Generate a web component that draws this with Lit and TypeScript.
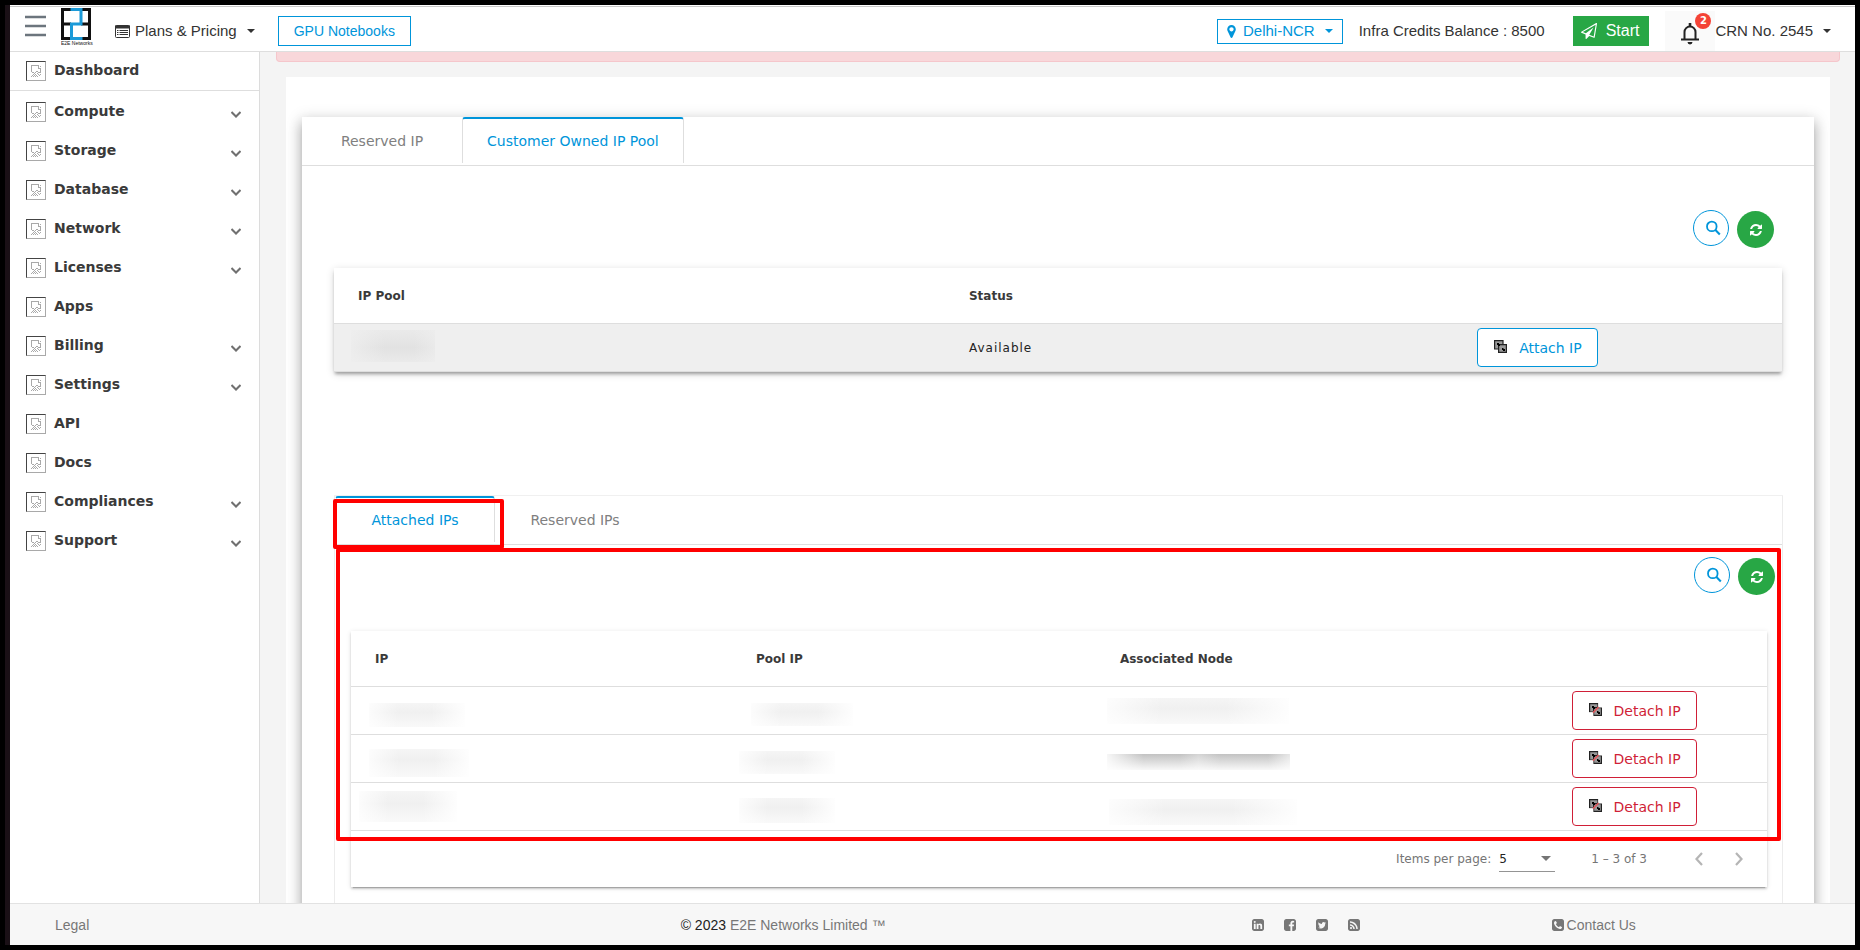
import { LitElement, html, svg, css, nothing } from "lit";
import { customElement, property } from "lit/decorators.js";
import { styleMap } from "lit/directives/style-map.js";

const SQUARE =
  "v960q0 119-84.5 203.5t-203.5 84.5h-960q-119 0-203.5-84.5t-84.5-203.5v-960q0-119 84.5-203.5t203.5-84.5h960q119 0 203.5 84.5t84.5 203.5z";

const GLYPHS: Record<string, string> = {
  refresh:
    "M1639 1056q0 5-1 7-64 268-268 434.5t-478 166.5q-146 0-282.5-55t-243.5-157l-129 129q-19 19-45 19t-45-19-19-45v-448q0-26 19-45t45-19h448q26 0 45 19t19 45-19 45l-137 137q71 66 161 102t187 36q134 0 250-65t186-179q11-17 53-117 8-23 30-23h192q13 0 22.5 9.5t9.5 22.5zm25-800v448q0 26-19 45t-45 19h-448q-26 0-45-19t-19-45 19-45l138-138q-148-137-349-137-134 0-250 65t-186 179q-11 17-53 117-8 23-30 23h-199q-13 0-22.5-9.5t-9.5-22.5v-7q65-268 270-434.5t480-166.5q146 0 284 55.5t245 156.5l130-129q19-19 45-19t45 19 19 45z",
  marker:
    "M1152 640q0-106-75-181t-181-75-181 75-75 181 75 181 181 75 181-75 75-181zm256 0q0 109-33 179l-364 774q-16 33-47.5 52t-67.5 19-67.5-19-46.5-52l-365-774q-33-70-33-179 0-212 150-362t362-150 362 150 150 362z",
  plane:
    "M1764 11q33 24 27 64l-256 1536q-5 29-32 45-14 8-31 8-11 0-24-5l-527-215-298 327q-18 21-47 21-14 0-23-4-19-7-30-23.5t-11-36.5v-452l-472-193q-37-14-40-55-3-39 32-59l1664-960q35-21 68 2zm-342 1499l221-1323-1434 827 336 137 863-639-478 797z",
  linkedin:
    "M365 1414h231v-694h-231v694zm246-908q-1-52-36-86t-93-34-94.5 34-36.5 86q0 51 35.5 85.5t92.5 34.5h1q59 0 95-34.5t36-85.5zm585 908h231v-398q0-154-73-233t-193-79q-136 0-209 117h2v-101h-231q3 66 0 694h231v-388q0-38 7-56 15-35 45-59.5t74-24.5q116 0 116 157v371zm468-998" + SQUARE,
  facebook:
    "M1376 128q119 0 203.5 84.5t84.5 203.5v960q0 119-84.5 203.5t-203.5 84.5h-188v-595h199l30-232h-229v-148q0-56 23.5-84t91.5-28l122-1v-207q-63-9-178-9-136 0-217.5 80t-81.5 226v171h-200v232h200v595h-532q-119 0-203.5-84.5t-84.5-203.5v-960q0-119 84.5-203.5t203.5-84.5h960z",
  twitter:
    "M1408 610q-56 25-121 34 68-40 93-117-65 38-134 51-61-66-153-66-87 0-148.5 61.5t-61.5 148.5q0 29 5 48-129-7-242-65t-192-155q-29 50-29 106 0 114 91 175-47-1-100-26v2q0 75 50 133.5t123 72.5q-29 8-51 8-13 0-39-4 21 63 74.5 104t121.5 42q-116 90-261 90-26 0-50-3 148 94 322 94 112 0 210-35.5t168-95 120.5-137 75-162 24.5-168.5q0-18-1-27 63-45 105-109zm256-194" + SQUARE,
  rss:
    "M640 1280q0-53-37.5-90.5t-90.5-37.5-90.5 37.5-37.5 90.5 37.5 90.5 90.5 37.5 90.5-37.5 37.5-90.5zm351 94q-13-232-177-396t-396-177q-14-1-24 9t-10 23v128q0 13 8.5 22t21.5 10q154 11 264 121t121 264q1 13 10 21.5t22 8.5h128q13 0 23-10t9-24zm384 1q-5-154-56-297.5t-139.5-260-205-205-260-139.5-297.5-56q-14-1-23 9-10 10-10 23v128q0 13 9 22t22 10q204 7 378 111.5t278.5 278.5 111.5 378q1 13 10 22t22 9h128q13 0 23-10 11-9 9-23zm289-959" + SQUARE,
  phone:
    "M1408 1193q0-11-2-16t-18-16.5-40.5-25-47.5-26.5-45.5-25-28.5-15q-5-3-19-13t-25-15-21-5q-15 0-36.5 20.5t-39.5 45-38.5 45-33.5 20.5q-7 0-16.5-3.5t-15.5-6.5-17-9.5-14-8.5q-99-55-170-126.5t-127-170.5q-2-3-8.5-14t-9.5-17-6.5-15.5-3.5-16.5q0-13 20.5-33.5t45-38.5 45-39.5 20.5-36.5q0-10-5-21t-15-25-13-19q-3-6-15-28.5t-25-45.5-26.5-47.5-25-40.5-16.5-18-16-2q-48 0-101 22-46 21-80 94.5t-34 130.5q0 16 2.5 34t5 30.5 9 33 10 29.5 12.5 33 11 30q60 164 216.5 320.5t320.5 216.5q6 2 30 11t33 12.5 29.5 10 33 9 30.5 5 34 2.5q57 0 130.5-34t94.5-80q22-53 22-101zm256-777" + SQUARE,
};

const glyph = (name: string, size: number) => html`
  <svg width=${size} height=${size} viewBox="0 0 1792 1792" fill="currentColor" aria-hidden="true">
    <path d=${GLYPHS[name]}></path>
  </svg>`;

const caret = html`<svg width="8" height="4" viewBox="0 0 8 4" fill="currentColor" aria-hidden="true"><path d="M0 0h8L4 4z"></path></svg>`;

const searchIcon = html`<svg width="16" height="16" viewBox="0 0 16 16" fill="none" stroke="currentColor" stroke-width="1.8" aria-hidden="true"><circle cx="6.8" cy="6.4" r="4.8"></circle><path d="M10.2 9.8l4.6 4.6" stroke-width="2.1"></path></svg>`;

const missingPicture = html`<svg width="10" height="12" viewBox="0 0 10 12" fill="#a9a9a9" shape-rendering="crispEdges" aria-hidden="true">
  <path d="M0 0h8v1H0zM0 1h1v6H0zM7 1h1v3H7zM9 1h1v1H9zM8 3h2v1H8zM9 4h1v4H9zM1 7h2v1H1zM3 8h1v1H3zM4 7h1v1H4zM5 6h2v1H5zM7 7h3v1H7zM2 9h1v1H2zM4 9h1v1H4zM6 8h1v1H6zM7 9h1v1H7zM1 10h1v1H1zM3 10h1v1H3zM5 10h1v1H5zM8 10h1v1H8zM0 11h1v1H0zM2 11h1v1H2zM4 11h1v1H4zM6 11h1v1H6zM9 9h1v1H9z"></path></svg>`;

const linkIcon = (cut: boolean) => html`<svg width="13" height="13" viewBox="0 0 13 13" aria-hidden="true">
  <path d="M.6.6h8.400v8.400H.6z" fill="#999" stroke="#222" stroke-width="1.200"></path>
  <path d="M4.600 4.600h7.800v7.800H4.600z" fill="#999" stroke="#222" stroke-width="1.200"></path>
  <path d="M3 3h2v1h1v2H4V5H3zM8 8h1.500v1H11v2H9v-1H8z" fill="#000"></path>
  ${cut ? svg`<path d="M9.800 0v3.800H13M0 9.800h3.800V13" stroke="#fff" stroke-width="1.200" fill="none"></path><path d="M4 9.600L9.600 4" stroke="#e4575c" stroke-width="1.500"></path>` : nothing}
</svg>`;

const MENU: [string, boolean][] = [
  ["Compute", true], ["Storage", true], ["Database", true], ["Network", true], ["Licenses", true], ["Apps", false],
  ["Billing", true], ["Settings", true], ["API", false], ["Docs", false], ["Compliances", true], ["Support", true],
];

interface Smudge { w: number; h: number; x: number; y: number; tone: "light" | "grey" | "dark" }

const smudge = (s: Smudge) => html`<span class="smudge ${s.tone}" style=${styleMap({
  width: `${s.w}px`, height: `${s.h}px`, marginLeft: `${s.x}px`, marginTop: `${s.y}px`,
})}></span>`;

const ROWS: Smudge[][] = [
  [
    { w: 96, h: 24, x: 18, y: 16, tone: "light" },
    { w: 102, h: 23, x: -5, y: 16, tone: "light" },
    { w: 182, h: 26, x: -13, y: 11, tone: "light" },
  ],
  [
    { w: 100, h: 28, x: 18, y: 14, tone: "light" },
    { w: 96, h: 23, x: -17, y: 16, tone: "light" },
    { w: 183, h: 16, x: -13, y: 19, tone: "dark" },
  ],
  [
    { w: 98, h: 31, x: 8, y: 8, tone: "light" },
    { w: 96, h: 25, x: -17, y: 15, tone: "light" },
    { w: 188, h: 26, x: -11, y: 16, tone: "light" },
  ],
];

const base = css`
  * { box-sizing: border-box; }
  svg { display: block; flex: none; }
  button, select { font: inherit; color: inherit; background: none; border: 0; padding: 0; margin: 0; cursor: pointer; }
  a { color: inherit; text-decoration: none; }
  ul { list-style: none; margin: 0; padding: 0; }
`;

@customElement("top-bar")
class TopBar extends LitElement {
  static styles = [base, css`
    :host { display: block; margin-top: 1px; border-top: 1px solid #c8c8c8; border-bottom: 1px solid #dedede;
      font: 15px/20px "Liberation Sans", Arial, sans-serif; color: #333; background: #fff; }
    .bar { display: flex; align-items: center; height: 44px; padding: 4px 24px 0 15px; }
    .burger { color: #6c757d; align-self: flex-start; padding-top: 4px; }
    .logo { margin-left: 15px; align-self: flex-start; margin-top: -3px; }
    .menu { display: flex; align-items: center; gap: 5px; }
    .menu .caret { margin-left: 5px; }
    .plans { margin-left: 20px; }
    .outlined { display: flex; align-items: center; border: 1px solid #0095da; color: #0095da; }
    .gpu { height: 30px; padding: 0 15px; margin-left: 23px; font-size: 14px; }
    .region { height: 25px; padding: 0 9px 0 6px; margin-left: auto; gap: 4px; }
    .region .caret { margin-left: 6px; }
    .credits { margin-left: 16px; }
    .start { display: flex; align-items: center; gap: 9px; height: 30px; padding: 0 10px 0 8px; margin-left: 28px;
      background: #28a745; color: #fff; font-size: 16px; }
    .bell { position: relative; display: flex; align-items: center; justify-content: center; width: 50px; height: 40px;
      margin-left: 16px; padding-top: 5px; background: #fafafa; align-self: flex-end; color: #222; }
    .badge { position: absolute; top: 2px; right: 4px; width: 16px; height: 16px; border-radius: 8px;
      background: #f44336; color: #fff; font: bold 10px/16px "DejaVu Sans", sans-serif; text-align: center; }
  `];
  render() {
    return html`<header class="bar">
      <button class="burger" aria-label="Toggle menu">
        <svg width="21" height="22" viewBox="0 0 21 22" fill="none" stroke="currentColor" stroke-width="2.500"><path d="M0 2h21M0 11h21M0 20h21"></path></svg>
      </button>
      <a class="logo" href="#" aria-label="E2E Networks">
        <svg width="34" height="40" viewBox="0 0 34 40">
          <g fill="none" stroke="#111" stroke-width="3"><path d="M10 1.500H1.500v29H10M1.500 16H10M21 1.500h7.500v29H21M28.500 16H20"></path></g>
          <path d="M9.500 1.500h10.500V16h-9.500v14.500h11" fill="none" stroke="#1b9ad8" stroke-width="3"></path>
          <text x="0" y="37" font-family="Liberation Sans" font-size="5" fill="#111">E2E Networks</text>
        </svg>
      </a>
      <button class="menu plans">
        <svg width="15" height="13" viewBox="0 0 15 13" fill="none" stroke="currentColor"><rect x=".5" y=".5" width="14" height="12" rx="1"></rect><path d="M0 2h15" stroke-width="3"></path><path d="M2 5.500h1.500M4.500 5.500h8.500M2 7.500h1.500M4.500 7.500h8.500M2 9.500h1.500M4.500 9.500h8.500"></path></svg>
        Plans &amp; Pricing <span class="caret">${caret}</span>
      </button>
      <button class="outlined gpu">GPU Notebooks</button>
      <button class="outlined region">${glyph("marker", 15)} Delhi-NCR <span class="caret">${caret}</span></button>
      <span class="credits">Infra Credits Balance : 8500</span>
      <button class="start">${glyph("plane", 16)} Start</button>
      <button class="bell" aria-label="Notifications">
        <svg width="18" height="22" viewBox="0 0 18 22" fill="none" stroke="currentColor" stroke-width="2"><path d="M0 16.500h18M3.500 16V9a5.500 5.500 0 0 1 11 0v7"></path><path d="M9 0v3.500" stroke-width="2.600"></path><path d="M6.500 19h5a2.500 2.500 0 0 1-5 0z" fill="currentColor" stroke="none"></path></svg>
        <span class="badge">2</span>
      </button>
      <button class="menu">CRN No. 2545 <span class="caret">${caret}</span></button>
    </header>`;
  }
}

@customElement("side-menu")
class SideMenu extends LitElement {
  static styles = [base, css`
    :host { display: block; border-right: 1px solid #dcdcdc; background: #fff;
      font: bold 14px/18px "DejaVu Sans", sans-serif; color: #3a3a3a; }
    .item { display: flex; align-items: center; gap: 8px; height: 39px; padding: 0 18px 0 16px; }
    .first { border-bottom: 1px solid #dedede; }
    .list { padding-top: 1px; }
    .frame { display: flex; align-items: center; justify-content: center; flex: none; width: 20px; height: 20px;
      border: 1px solid; border-color: #444 #a9a9a9 #a9a9a9 #444; }
    .label { padding-bottom: 2px; }
    .chevron { margin-left: auto; padding-top: 6px; color: #707070; }
  `];
  item(label: string, nested: boolean, extra = "") {
    return html`<a class="item ${extra}" href="#">
      <span class="frame">${missingPicture}</span><span class="label">${label}</span>
      ${nested ? html`<span class="chevron"><svg width="10" height="7" viewBox="0 0 10 7" fill="none" stroke="currentColor" stroke-width="2"><path d="M.5 1L5 5.500 9.500 1"></path></svg></span>` : nothing}
    </a>`;
  }
  render() {
    return html`<nav>
      ${this.item("Dashboard", false, "first")}
      <ul class="list">${MENU.map(([label, nested]) => html`<li>${this.item(label, nested)}</li>`)}</ul>
    </nav>`;
  }
}

@customElement("tab-strip")
class TabStrip extends LitElement {
  @property({ attribute: false }) tabs: string[] = [];
  @property({ type: Number }) active = 0;
  static styles = [base, css`
    :host { display: block; border-bottom: 1px solid #dedede; font: 14px/20px "DejaVu Sans", sans-serif; color: #808080; }
    .tabs { display: flex; height: 48px; }
    .tab { height: 46px; min-width: 160px; padding: 0 24px; border: 1px solid transparent; border-width: 2px 1px 0; }
    .tab.on { color: #0095da; border-color: #0095da #dedede; border-radius: 3px 3px 0 0; }
    .tab.on:first-child { border-left-color: transparent; }
  `];
  render() {
    return html`<div class="tabs" role="tablist">${this.tabs.map((t, i) => html`
      <button class="tab ${i === this.active ? "on" : ""}" role="tab" aria-selected=${i === this.active}>${t}</button>`)}</div>`;
  }
}

@customElement("table-tools")
class TableTools extends LitElement {
  static styles = [base, css`
    :host { display: flex; justify-content: flex-end; align-items: flex-start; gap: 8px; height: 38px; }
    .round { display: flex; align-items: center; justify-content: center; width: 36px; height: 36px; border-radius: 50%; }
    .search { border: 1px solid #0095da; color: #0095da; padding-left: 3px; }
    .refresh { align-self: flex-end; width: 37px; height: 37px; background: #28a745; color: #fff; }
  `];
  render() {
    return html`<button class="round search" aria-label="Search">${searchIcon}</button>
      <button class="round refresh" aria-label="Refresh">${glyph("refresh", 14)}</button>`;
  }
}

@customElement("ip-pool-page")
class IpPoolPage extends LitElement {
  static styles = [base, css`
    :host { display: block; overflow: hidden; padding: 0 25px 0 26px; background: #f4f4f4;
      font: 12px/16px "DejaVu Sans", sans-serif; color: #3a3a3a; }
    .alert { height: 10px; margin: 0 -10px; border: 1px solid #f5c6cb; border-top: 0; border-radius: 0 0 4px 4px; background: #f8d7da; }
    .sheet { margin-top: 15px; padding: 40px 16px 0; background: #fff; overflow: hidden; }
    .card { background: #fff; padding-bottom: 60px; box-shadow: 0 5px 5px -3px rgba(0,0,0,.2), 0 8px 12px 1px rgba(0,0,0,.2), 0 3px 14px 2px rgba(0,0,0,.14); }
    .body { padding: 44px 32px 0; }
    .body > table-tools { padding-right: 8px; margin-bottom: 20px; }
    .raised { background: #fff; box-shadow: 0 3px 1px -2px rgba(0,0,0,.2), 0 2px 2px 0 rgba(0,0,0,.14), 0 1px 5px 0 rgba(0,0,0,.12); }
    .pool { box-shadow: 0 3px 3px -1px rgba(0,0,0,.3), 0 2px 8px 0 rgba(0,0,0,.16); }
    table { width: 100%; table-layout: fixed; border-collapse: separate; border-spacing: 0; }
    th, td { padding: 0; text-align: left; border-bottom: 1px solid #dedede; }
    th { height: 56px; font-weight: bold; }
    td { height: 48px; vertical-align: top; }
    th:first-child { padding-left: 24px; }
    .shaded { background: #efefef; }
    .middle { vertical-align: middle; }
    .status { color: #222; letter-spacing: 1px; }
    .p1 { width: 43.85%; } .p2 { width: 35.1%; }
    .a1 { width: 28.6%; } .a2 { width: 25.7%; } .a3 { width: 31.9%; }
    .action { display: flex; align-items: center; gap: 12px; height: 39px; padding: 0 15px 0 16px; border: 1px solid; border-radius: 4px;
      background: #fff; font-size: 14px; line-height: 20px; }
    .action svg { margin-bottom: 2px; }
    .attach { color: #0095da; }
    .detach { color: #d01f37; }
    .smudge { display: block; }
    .light { background: linear-gradient(90deg, rgba(255,255,255,.8), transparent 30%, transparent 65%, rgba(255,255,255,.9)), linear-gradient(#f5f5f5, #f0f0f0 40%, #f9f9f9); }
    .grey { background: linear-gradient(90deg, rgba(239,239,239,.8), transparent 40%, transparent 75%, rgba(239,239,239,.6)), linear-gradient(#eaeaea, #e2e2e2 55%, #eaeaea); }
    .dark { background: linear-gradient(90deg, rgba(255,255,255,.85), transparent 20%, transparent 40%, rgba(255,255,255,.3) 50%, transparent 62%, transparent 88%, rgba(255,255,255,.6)), linear-gradient(#c2c2c2, #f8f8f8); }
    .attached { position: relative; margin: 124px -1px 0 0; padding-bottom: 80px; border: 1px solid #ececec; border-width: 0 1px; box-shadow: 0 -1px 0 #f0f0f0; }
    .attached > table-tools { margin: 12px 7px 36px; }
    .attached > .raised { margin: 0 15px 0 16px; }
    .mark { position: absolute; border: 4px solid #f00; border-radius: 2px; pointer-events: none; }
    .mark-tab { left: -2px; top: 3px; width: 171px; height: 50px; }
    .mark-table { left: 1px; right: 1px; top: 52px; height: 293px; }
    .pager { display: flex; align-items: center; justify-content: flex-end; height: 56px; padding-right: 24px; color: #757575; }
    .size { position: relative; display: flex; align-items: center; margin: 0 36px 0 8px; border-bottom: 1px solid #949494; color: #222; }
    .size select { appearance: none; width: 56px; height: 25px; }
    .size svg { position: absolute; right: 4px; top: 10px; color: #757575; pointer-events: none; }
    .range { margin-right: 48px; }
    .step { color: #b5b5b5; }
    .step + .step { margin-left: 32px; }
  `];
  step(d: string, label: string) {
    return html`<button class="step" aria-label=${label}><svg width="8" height="14" viewBox="0 0 8 14" fill="none" stroke="currentColor" stroke-width="2.200"><path d=${d}></path></svg></button>`;
  }
  render() {
    return html`
      <div class="alert" role="alert"></div>
      <section class="sheet"><div class="card">
        <tab-strip .tabs=${["Reserved IP", "Customer Owned IP Pool"]} active="1"></tab-strip>
        <div class="body">
          <table-tools></table-tools>
          <div class="raised pool"><table>
            <colgroup><col class="p1"><col class="p2"><col></colgroup>
            <thead><tr><th>IP Pool</th><th>Status</th><th></th></tr></thead>
            <tbody><tr class="shaded">
              <td>${smudge({ w: 84, h: 32, x: 17, y: 6, tone: "grey" })}</td>
              <td class="status middle">Available</td>
              <td class="middle"><button class="action attach">${linkIcon(false)} Attach IP</button></td>
            </tr></tbody>
          </table></div>
          <section class="attached">
            <tab-strip .tabs=${["Attached IPs", "Reserved IPs"]} active="0"></tab-strip>
            <table-tools></table-tools>
            <div class="raised">
              <table>
                <colgroup><col class="a1"><col class="a2"><col class="a3"><col></colgroup>
                <thead><tr><th>IP</th><th>Pool IP</th><th>Associated Node</th><th></th></tr></thead>
                <tbody>${ROWS.map((row) => html`<tr>
                  ${row.map((s) => html`<td>${smudge(s)}</td>`)}
                  <td class="middle"><button class="action detach">${linkIcon(true)} Detach IP</button></td>
                </tr>`)}</tbody>
              </table>
              <div class="pager">
                <label for="page-size">Items per page:</label>
                <span class="size"><select id="page-size"><option>5</option><option>10</option></select>
                  <svg width="10" height="5" viewBox="0 0 10 5" fill="currentColor"><path d="M0 0h10L5 5z"></path></svg></span>
                <span class="range">1 – 3 of 3</span>
                ${this.step("M7 1L1.500 7 7 13", "Previous page")}${this.step("M1 1l5.500 6L1 13", "Next page")}
              </div>
            </div>
            <div class="mark mark-table"></div>
            <div class="mark mark-tab"></div>
          </section>
        </div>
      </div></section>`;
  }
}

@customElement("page-footer")
class PageFooter extends LitElement {
  static styles = [base, css`
    :host { display: block; border-top: 1px solid #e2e2e2; background: #f7f7f7; font: 14px/20px "Liberation Sans", Arial, sans-serif; color: #777; }
    .row { display: grid; grid-template-columns: 36.35% 30.9% 16.25% 1fr; align-items: center; height: 41px; }
    .legal { padding-left: 45px; }
    .year { color: #222; }
    .social { display: flex; gap: 18px; }
    .contact { display: flex; align-items: center; gap: 2px; }
  `];
  render() {
    return html`<footer class="row">
      <a class="legal" href="#">Legal</a>
      <span><span class="year">© 2023</span> <a href="#">E2E Networks Limited ™</a></span>
      <span class="social">${["linkedin", "facebook", "twitter", "rss"].map((n) => html`<a href="#" aria-label=${n}>${glyph(n, 14)}</a>`)}</span>
      <a class="contact" href="#">${glyph("phone", 14)} Contact Us</a>
    </footer>`;
  }
}

@customElement("app-root")
class AppRoot extends LitElement {
  static styles = [base, css`
    :host { display: flex; flex-direction: column; box-sizing: border-box; height: 100vh; overflow: hidden; border: 5px solid #000;
      background: linear-gradient(90deg, #1a1016 5px, #fff 5px); padding-left: 5px; }
    .middle { display: grid; grid-template-columns: 250px 1fr; flex: 1; min-height: 0; }
  `];
  render() {
    return html`<top-bar></top-bar>
      <div class="middle"><side-menu></side-menu><ip-pool-page></ip-pool-page></div>
      <page-footer></page-footer>`;
  }
}
